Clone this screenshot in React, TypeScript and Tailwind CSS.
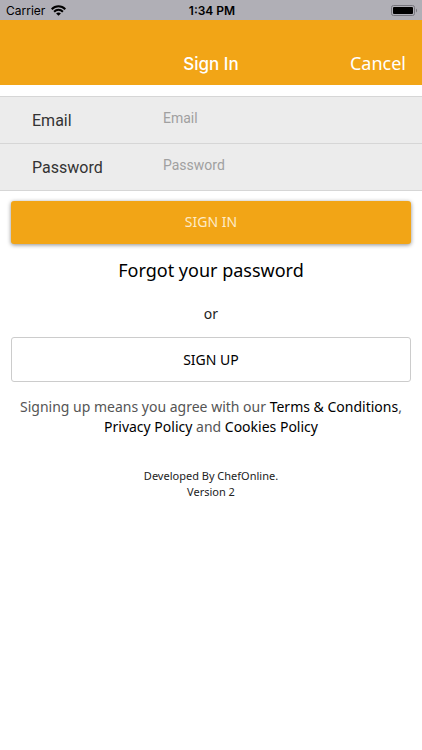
import { memo, useCallback, useState, type ChangeEvent, type FormEvent } from "react";

const WifiIcon = () => (
  <svg width="15" height="11" viewBox="0 0 15 11" aria-hidden="true">
    <g fill="none" stroke="#000" strokeWidth="2">
      <path d="M0.7 4.2C4.5 0.3 10.5 0.3 14.3 4.2" />
      <path d="M3.1 6.7C5.6 4.2 9.4 4.2 11.9 6.7" />
    </g>
    <path d="M7.5 10.8L5.1 8.4C6.5 7.1 8.5 7.1 9.9 8.4Z" fill="#000" />
  </svg>
);

const BatteryIcon = () => (
  <svg width="27" height="12" viewBox="0 0 27 12" aria-hidden="true">
    <rect x="0.5" y="0.5" width="23" height="10" rx="2" fill="none" stroke="#77767d" />
    <rect x="2" y="2" width="20" height="7" rx="1" fill="#000" />
    <path d="M25 3.5C26.4 4 26.4 7 25 7.5Z" fill="#77767d" />
  </svg>
);

const StatusBar = () => (
  <div className="grid h-5 grid-cols-3 items-center bg-[#b0afb6] pt-px pr-1 pl-[6px] font-['Inter',sans-serif] text-xs text-black">
    <div className="flex items-center gap-[6px]">
      <span>Carrier</span>
      <WifiIcon />
    </div>
    <span className="text-center font-semibold">1:34 PM</span>
    <div className="flex justify-end">
      <BatteryIcon />
    </div>
  </div>
);

interface FieldProps {
  id: string;
  label: string;
  type: string;
  value: string;
  onChange: (value: string) => void;
}

const Field = ({ id, label, type, value, onChange }: FieldProps) => {
  const handleChange = useCallback(
    (e: ChangeEvent<HTMLInputElement>) => {
      onChange(e.target.value);
    },
    [onChange]
  );

  return (
    <div className="flex h-[47px] items-center border-b border-[#d6d6d6] pl-8 font-['Roboto',sans-serif]">
      <label htmlFor={id} className="w-[131px] shrink-0 pt-px text-base text-[#333]">
        {label}
      </label>
      <input
        id={id}
        type={type}
        value={value}
        onChange={handleChange}
        placeholder={label}
        className="min-w-0 flex-1 bg-transparent pr-4 pb-1 text-sm text-[#333] outline-none placeholder:text-[#a0a0a0]"
      />
    </div>
  );
};

const App = () => {
  const [email, setEmail] = useState("");
  const [password, setPassword] = useState("");

  const handleSubmit = useCallback((e: FormEvent<HTMLFormElement>) => {
    e.preventDefault();
  }, []);

  return (
    <div className="min-h-screen bg-white font-['Noto_Sans',sans-serif]">
      <StatusBar />

      {/* Header */}
      <header className="grid h-[65px] grid-cols-3 items-end bg-[#f2a516] px-4 pb-2 text-white">
        <h1 className="col-start-2 text-center font-['Inter',sans-serif] text-[17px] leading-[26px] font-medium">
          Sign In
        </h1>
        <button type="button" className="justify-self-end text-lg leading-7">
          Cancel
        </button>
      </header>

      <main>
        {/* Credentials */}
        <form onSubmit={handleSubmit}>
          <div className="mt-[11px] border-t border-[#d6d6d6] bg-[#ececec]">
            <Field id="email" label="Email" type="email" value={email} onChange={setEmail} />
            <Field id="password" label="Password" type="password" value={password} onChange={setPassword} />
          </div>
          <div className="px-[11px] pt-[10px]">
            <button
              type="submit"
              className="h-[43px] w-full rounded-[3px] bg-[#f2a516] pb-px text-sm text-[#fdebc8] shadow-[0_1px_4px_rgba(0,0,0,0.45)]"
            >
              SIGN IN
            </button>
          </div>
        </form>

        <div className="flex flex-col items-center px-[11px] text-center text-sm">
          <a href="#forgot" className="mt-3 text-lg leading-7 text-black">
            Forgot your password
          </a>
          <span className="mt-5 leading-5 text-[#222]">or</span>
          <button
            type="button"
            className="mt-[13px] h-[45px] w-full rounded-[3px] border border-[#ccc] bg-white text-black"
          >
            SIGN UP
          </button>

          {/* Legal */}
          <p className="mt-[15px] leading-5 text-[#555]">
            Signing up means you agree with our{" "}
            <a href="#terms" className="text-black">Terms &amp; Conditions</a>,{" "}
            <a href="#privacy" className="text-black">Privacy Policy</a> and{" "}
            <a href="#cookies" className="text-black">Cookies Policy</a>
          </p>
        </div>

        <footer className="mt-[31px] text-center text-[11px] leading-4 text-[#222]">
          <p>Developed By ChefOnline.</p>
          <p>Version 2</p>
        </footer>
      </main>
    </div>
  );
};

export default memo(App);
